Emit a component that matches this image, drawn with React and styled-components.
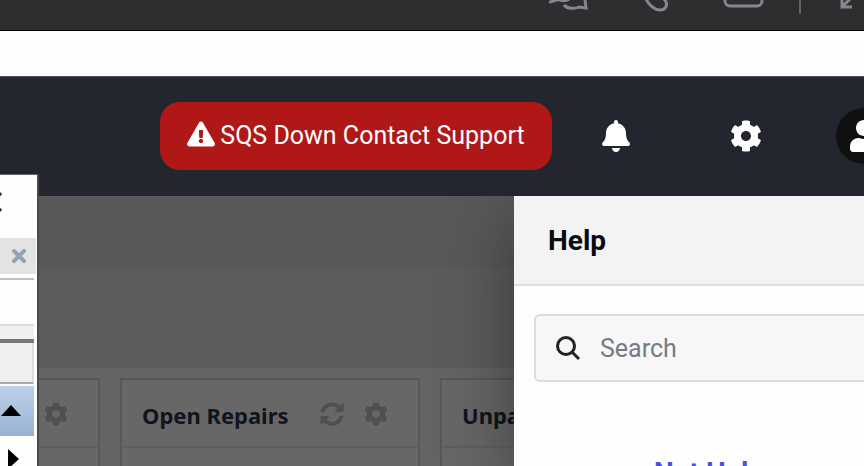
import React from 'react';
import styled, { createGlobalStyle } from 'styled-components';
import { FaBell, FaCog, FaExclamationTriangle, FaSyncAlt, FaUser } from 'react-icons/fa';

const App = () => {
    return (
        <Page>
            <GlobalStyle />
            <CallBar>
                <BarButton aria-label="Chat">
                    <svg width="42" height="30" viewBox="0 0 42 30">
                        <path d="M2 22C6 22 9 19 13 20C16 21 21 21 23 18" />
                        <path d="M17 25C20 29 28 29 32 27L39 28L38 20" />
                    </svg>
                </BarButton>
                <BarButton aria-label="Call">
                    <svg width="42" height="30" viewBox="0 0 42 30">
                        <path d="M10 17C13 24 19 30 25 30C31 30 34 24 29 19" />
                    </svg>
                </BarButton>
                <BarButton aria-label="Mail">
                    <svg width="42" height="30" viewBox="0 0 42 30">
                        <rect x="2" y="2" width="37" height="24" rx="5" />
                    </svg>
                </BarButton>
                <BarDivider />
                <BarButton aria-label="Collapse">
                    <svg width="42" height="30" viewBox="0 0 42 30">
                        <path d="M10 16V27H20M10 27L22 15" />
                    </svg>
                </BarButton>
            </CallBar>
            <Strip />
            <Header>
                <SupportButton>
                    <FaExclamationTriangle size={28} />
                    SQS Down Contact Support
                </SupportButton>
                <HeaderButton aria-label="Notifications"><FaBell /></HeaderButton>
                <HeaderButton aria-label="Settings"><FaCog /></HeaderButton>
                <Avatar aria-label="Account"><FaUser /></Avatar>
            </Header>
            <Main>
                <Crumbs />
                <Banner />
                <Cards>
                    <Card $first>
                        <CardHead>
                            <IconButton aria-label="Card settings"><FaCog /></IconButton>
                        </CardHead>
                    </Card>
                    <Card>
                        <CardHead>
                            <h2>Open Repairs</h2>
                            <IconButton aria-label="Refresh"><FaSyncAlt /></IconButton>
                            <IconButton aria-label="Card settings"><FaCog /></IconButton>
                        </CardHead>
                    </Card>
                    <Card>
                        <CardHead>
                            <h2>Unpaid</h2>
                        </CardHead>
                    </Card>
                </Cards>
                <Drawer>
                    <DrawerHead>
                        <h2>Help</h2>
                    </DrawerHead>
                    <SearchBox>
                        <svg width="26" height="26" viewBox="0 0 26 26">
                            <circle cx="10" cy="11" r="8.5" />
                            <path d="M16 17L23 24" />
                        </svg>
                        <input type="search" placeholder="Search" aria-label="Search" />
                    </SearchBox>
                    <HelpLink href="#help">Not Help</HelpLink>
                </Drawer>
            </Main>
            <SideWindow>
                <WindowTitle>
                    <CloseButton aria-label="Close window">
                        <svg width="24" height="24" viewBox="0 0 24 24">
                            <path d="M5 3L21 21M21 3L5 21" />
                        </svg>
                    </CloseButton>
                </WindowTitle>
                <TabRow>
                    <TabClose aria-label="Close tab">
                        <svg width="16" height="16" viewBox="0 0 16 16">
                            <path d="M3 3L13 13M13 3L3 13" />
                        </svg>
                    </TabClose>
                </TabRow>
                <Blank />
                <ToolRow />
                <ColumnHead />
                <ScrollButton aria-label="Scroll up">
                    <svg width="20" height="12" viewBox="0 0 20 12"><path d="M10 0L20 11H0Z" /></svg>
                </ScrollButton>
                <NextButton aria-label="Next">
                    <svg width="12" height="20" viewBox="0 0 12 20"><path d="M0 0L11 10L0 20Z" /></svg>
                </NextButton>
            </SideWindow>
        </Page>
    );
};

const GlobalStyle = createGlobalStyle`
    * {
        box-sizing: border-box;
    }
    body {
        margin: 0;
        font-family: Roboto, "Liberation Sans", sans-serif;
    }
    button {
        padding: 0;
        border: 0;
        background: none;
        font-family: inherit;
        cursor: pointer;
    }
    h2 {
        margin: 0;
    }
    svg {
        display: block;
        flex: none;
    }
`;

const Page = styled.div`
    position: relative;
    display: flex;
    flex-direction: column;
    height: 100vh;
    overflow: hidden;
    background: #646464;
`;

const CallBar = styled.nav`
    display: flex;
    justify-content: flex-end;
    align-items: flex-end;
    gap: 46px;
    height: 31px;
    flex: none;
    overflow: hidden;
    background: #2d2e30;
    border-bottom: 1px solid #000;
`;

const BarButton = styled.button`
    height: 50px;
    flex: none;
    svg {
        overflow: visible;
        fill: none;
        stroke: #85878a;
        stroke-width: 3;
        margin-bottom: 20px;
    }
    &:last-child {
        width: 32px;
        margin-left: -46px;
        overflow: hidden;
    }
`;

const BarDivider = styled.span`
    width: 2px;
    height: 30px;
    flex: none;
    margin: 0 31px 16px -12px;
    background: #626365;
`;

const Strip = styled.div`
    height: 45px;
    flex: none;
    background: #fefefe;
`;

const Header = styled.header`
    display: flex;
    align-items: center;
    justify-content: flex-end;
    height: 120px;
    flex: none;
    padding-bottom: 2px;
    background: #23262f;
    border-top: 1px solid #4b4e55;
`;

const SupportButton = styled.button`
    display: flex;
    align-items: center;
    justify-content: center;
    gap: 5px;
    width: 392px;
    height: 68px;
    border-radius: 20px;
    background: #b01717;
    color: #fff;
    font-size: 25px;
    white-space: nowrap;
    svg {
        margin-bottom: 4px;
    }
`;

const HeaderButton = styled.button`
    display: grid;
    place-items: center;
    width: 32px;
    height: 32px;
    margin-left: 48px;
    color: #fff;
    font-size: 32px;
    & + & {
        margin-left: 98px;
    }
`;

const Avatar = styled.button`
    display: grid;
    place-items: center;
    width: 56px;
    height: 56px;
    flex: none;
    margin: 0 -28px 0 74px;
    border-radius: 50%;
    background: #101010;
    color: #fff;
    font-size: 32px;
`;

const Main = styled.main`
    position: relative;
    flex: 1;
    overflow: hidden;
    background: #646464;
`;

const Crumbs = styled.div`
    height: 72px;
    background: #595959;
`;

const Banner = styled.div`
    height: 100px;
    background: #5c5c5c;
`;

const Cards = styled.section`
    display: flex;
    gap: 20px;
    padding-top: 10px;
`;

const Card = styled.article`
    width: ${(props) => (props.$first ? '100px' : '300px')};
    height: 200px;
    flex: none;
    border: 2px solid #585858;
    background: #676767;
`;

const CardHead = styled.div`
    display: flex;
    align-items: center;
    justify-content: flex-end;
    gap: 20px;
    height: 68px;
    padding: 2px 30px 0 20px;
    border-bottom: 2px solid #5f5f5f;
    h2 {
        flex: 1;
        padding-top: 2px;
        color: #10151d;
        font-family: "Noto Sans", sans-serif;
        font-size: 22px;
        font-weight: 700;
        white-space: nowrap;
    }
`;

const IconButton = styled.button`
    color: #505050;
    font-size: 24px;
`;

const Drawer = styled.aside`
    position: absolute;
    top: 0;
    right: 0;
    bottom: 0;
    width: 350px;
    overflow: hidden;
    background: #fefefe;
    box-shadow: 0 20px 70px rgba(0, 0, 0, 0.4);
`;

const DrawerHead = styled.div`
    display: flex;
    align-items: center;
    height: 90px;
    padding: 0 34px;
    background: #f3f3f3;
    border-bottom: 2px solid #dfdfdf;
    h2 {
        color: #0b0b0f;
        font-size: 28px;
        font-weight: 700;
    }
`;

const SearchBox = styled.label`
    display: flex;
    align-items: center;
    gap: 18px;
    height: 68px;
    margin: 28px 0 0 20px;
    padding-left: 20px;
    border: 2px solid #dcdcdc;
    border-right: 0;
    border-radius: 6px 0 0 6px;
    background: #f7f7f7;
    svg {
        fill: none;
        stroke: #222;
        stroke-width: 3;
    }
    input {
        flex: 1;
        min-width: 0;
        padding: 0;
        border: 0;
        outline: 0;
        background: transparent;
        font-family: inherit;
        font-size: 25px;
    }
    input::placeholder {
        color: #757b84;
    }
`;

const HelpLink = styled.a`
    display: block;
    margin: 75px 0 0 140px;
    color: #4a50e0;
    font-size: 28px;
    font-weight: 700;
    line-height: 32px;
    text-decoration: none;
`;

const SideWindow = styled.aside`
    position: absolute;
    top: 174px;
    bottom: 0;
    left: 0;
    width: 39px;
    padding-right: 3px;
    overflow: hidden;
    background: #fefefe;
    border-top: 1px solid #666;
    border-right: 2px solid #4a4a4a;
`;

const WindowTitle = styled.div`
    display: flex;
    align-items: center;
    height: 63px;
    padding-bottom: 10px;
`;

const CloseButton = styled.button`
    margin-left: -20px;
    svg {
        fill: none;
        stroke: #333;
        stroke-width: 3;
    }
`;

const TabRow = styled.div`
    height: 42px;
    border-bottom: 2px solid #bfc3bf;
`;

const TabClose = styled.button`
    display: grid;
    place-items: center;
    width: 36px;
    height: 36px;
    background: #e3e3e3;
    svg {
        margin-left: 2px;
        fill: none;
        stroke: #93a2b5;
        stroke-width: 4;
        stroke-linecap: round;
    }
`;

const Blank = styled.div`
    height: 44px;
    background: #fefefe;
`;

const ToolRow = styled.div`
    height: 19px;
    background: #f0f0f0;
    border-top: 2px solid #dcdcdc;
    border-bottom: 4px solid #777;
`;

const ColumnHead = styled.div`
    height: 41px;
    margin-bottom: 2px;
    background: #efefef;
    border-right: 2px solid #ddd;
    border-bottom: 2px solid #aaa;
`;

const ScrollButton = styled.button`
    display: flex;
    align-items: center;
    width: 34px;
    height: 50px;
    padding-left: 1px;
    background: linear-gradient(#bcd1e8, #97b3d3);
`;

const NextButton = styled.button`
    display: flex;
    width: 34px;
    padding: 13px 0 0 8px;
`;

export default App;
